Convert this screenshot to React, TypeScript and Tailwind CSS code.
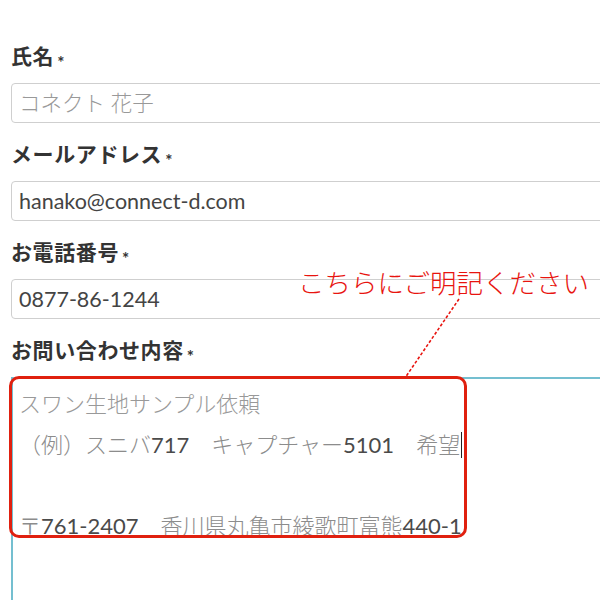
import React from 'react';

const font = { fontFamily: "Lato, 'Noto Sans CJK JP', sans-serif" };

// digits & ascii punctuation render darker than the kana in the reference
function Mixed({ text }: { text: string }) {
  const parts = text.split(/([0-9\-]+)/);
  return (
    <>
      {parts.map((p, i) =>
        /^[0-9\-]+$/.test(p) ? (
          <span key={i} className="text-[#4a4a4a]">{p}</span>
        ) : (
          <span key={i} className="font-light text-[#8c8c8c]">{p}</span>
        )
      )}
    </>
  );
}

function Label({ text }: { text: string }) {
  return (
    <div className="flex h-[24px] items-center text-[21px] font-bold leading-[24px] tracking-[0.6px] text-[#333]">
      <span>{text}</span>
      <span className="relative top-[6px] ml-[3px] text-[17px] leading-none">*</span>
    </div>
  );
}

function Field({ label, value, placeholder }: { label: string; value?: string; placeholder?: string }) {
  return (
    <div className="mb-[19px]">
      <Label text={label} />
      <div className="mt-[15px] flex h-[40px] w-[640px] items-center rounded-[4px] border border-[#cfcfcf] px-[7px] text-[21.5px]">
        {value ? (
          <span className="text-[#444]">{value}</span>
        ) : (
          <span className="font-light text-[#999]">{placeholder}</span>
        )}
      </div>
    </div>
  );
}

export default function App() {
  return (
    <div className="relative h-[600px] w-[600px] overflow-hidden bg-white" style={font}>
      <div className="pl-[11px] pt-[44px]">
        <Field label="氏名" placeholder="コネクト 花子" />
        <Field label="メールアドレス" value="hanako@connect-d.com" />
        <Field label="お電話番号" value="0877-86-1244" />
        <div>
          <Label text="お問い合わせ内容" />
          <div className="relative mt-[15px] h-[300px] w-[640px] border-l-2 border-t-2 border-[#74bfd0] pl-[6px] pt-[5px] text-[22px] leading-[40.5px]">
            <div className="font-light text-[#999]">スワン生地サンプル依頼</div>
            <div className="flex items-center">
              <span><Mixed text="（例）スニバ717　キャプチャー5101　希望" /></span>
              <span className="ml-[1px] inline-block h-[26px] w-[1px] bg-[#222]" />
            </div>
            <div>&nbsp;</div>
            <div><Mixed text="〒761-2407　香川県丸亀市綾歌町富熊440-1" /></div>
          </div>
        </div>
      </div>

      {/* annotation */}
      <div className="absolute left-[298px] top-[266px] text-[26.5px] font-light leading-[34px] text-[#e8140f]">
        こちらにご明記ください
      </div>
      <svg className="absolute left-0 top-0" width="600" height="600">
        <line x1="459" y1="299" x2="405" y2="378" stroke="#e8140f" strokeWidth="1.6" strokeDasharray="3 2" />
      </svg>
      <div className="absolute left-[9px] top-[376px] h-[162px] w-[458px] rounded-[10px] border-[3px] border-[#e0200f]" />
    </div>
  );
}
